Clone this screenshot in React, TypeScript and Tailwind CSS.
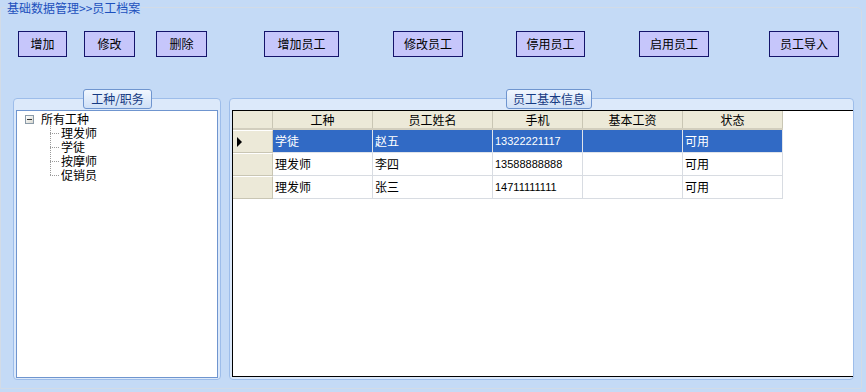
import React from "react";

const FONT = { fontFamily: '"Noto Sans CJK SC", "Liberation Sans", sans-serif' };

const BUTTONS = [
  { label: "增加", ml: "ml-[17px]", w: "w-[49px]" },
  { label: "修改", ml: "ml-[17px]", w: "w-[51px]" },
  { label: "删除", ml: "ml-[21px]", w: "w-[51px]" },
  { label: "增加员工", ml: "ml-[57px]", w: "w-[75px]" },
  { label: "修改员工", ml: "ml-[54px]", w: "w-[70px]" },
  { label: "停用员工", ml: "ml-[53px]", w: "w-[69px]" },
  { label: "启用员工", ml: "ml-[54px]", w: "w-[70px]" },
  { label: "员工导入", ml: "ml-[60px]", w: "w-[70px]" },
];

const COLS = [
  { title: "工种", w: "w-[100px]" },
  { title: "员工姓名", w: "w-[120px]" },
  { title: "手机", w: "w-[90px]" },
  { title: "基本工资", w: "w-[100px]" },
  { title: "状态", w: "w-[100px]" },
];

const ROWS = [
  ["学徒", "赵五", "13322221117", "", "可用"],
  ["理发师", "李四", "13588888888", "", "可用"],
  ["理发师", "张三", "14711111111", "", "可用"],
];

const TREE_CHILDREN = ["理发师", "学徒", "按摩师", "促销员"];

function Legend({ text, className }: { text: string; className: string }) {
  return (
    <div
      className={`absolute top-[-10px] h-[20px] flex items-center justify-center rounded-[3px] border border-[#6f95cf] bg-gradient-to-b from-[#f1f7fe] to-[#cfe0f7] text-[12px] leading-[14px] text-[#163a82] ${className}`}
    >
      {text}
    </div>
  );
}

export default function App() {
  return (
    <div className="w-[866px] h-[392px] bg-[#c4daf6] overflow-hidden text-black" style={FONT}>
      <div className="relative mt-[7px] w-[862px] h-[382px] border border-[#d2dbe7] rounded-tr-[5px] rounded-tl-[3px]">
        <div className="absolute top-[-7px] left-[5px] px-[1px] bg-[#c4daf6] text-[12px] leading-[14px] text-[#1c50bd]">
          基础数据管理&gt;&gt;员工档案
        </div>

        <div className="flex pt-[23px]">
          {BUTTONS.map((b) => (
            <button
              key={b.label}
              className={`${b.ml} ${b.w} h-[26px] border border-[#14146b] bg-[#c6c6fb] text-[12px] leading-[14px] flex items-center justify-center`}
            >
              {b.label}
            </button>
          ))}
        </div>

        <div className="flex mt-[41px]">
          {/* left group */}
          <div className="relative ml-[12px] w-[208px] h-[282px] rounded-[4px] border border-[#9dbdea] bg-[#dce9fa] pt-[11px] pl-[2px] pr-[2px] pb-[1px]">
            <Legend text="工种/职务" className="left-[69px] w-[69px]" />
            <div className="h-full bg-white border border-[#6f95cf] pt-[1px] text-[12px] leading-[14px]">
              <div className="flex items-center h-[14px]">
                <div className="ml-[8px] w-[9px] h-[9px] border border-[#8a9aa8] bg-gradient-to-br from-white to-[#d8d8d0] flex items-center justify-center">
                  <div className="w-[5px] h-[1px] bg-[#333]" />
                </div>
                <span className="ml-[7px]">所有工种</span>
              </div>
              <div className="flex ml-[33px]">
                <svg width="11" height="56" className="shrink-0">
                  <line x1="0.5" y1="0" x2="0.5" y2="49" stroke="#9a9a9a" strokeDasharray="1 1" />
                  {[7, 21, 35, 49].map((y) => (
                    <line key={y} x1="0" y1={y + 0.5} x2="10" y2={y + 0.5} stroke="#9a9a9a" strokeDasharray="1 1" />
                  ))}
                </svg>
                <div className="flex flex-col">
                  {TREE_CHILDREN.map((c) => (
                    <div key={c} className="h-[14px] leading-[14px]">
                      {c}
                    </div>
                  ))}
                </div>
              </div>
            </div>
          </div>

          {/* right group */}
          <div className="relative ml-[8px] w-[625px] h-[282px] rounded-[4px] border border-[#9dbdea] bg-[#dce9fa] pt-[11px] pl-[2px] pb-[2px]">
            <Legend text="员工基本信息" className="left-[276px] w-[86px]" />
            <div className="h-full bg-white border-l border-t border-b border-black overflow-hidden">
              <div className="flex w-fit h-[19px] border-b-[2px] border-[#d2cebe] bg-[#ece9d8]">
                <div className="w-[40px] border-r border-[#c9c6b4]" />
                {COLS.map((c) => (
                  <div
                    key={c.title}
                    className={`${c.w} flex items-center justify-center text-[12px] leading-[14px] border-r border-[#c9c6b4]`}
                  >
                    {c.title}
                  </div>
                ))}
              </div>
              {ROWS.map((r, i) => {
                const sel = i === 0;
                return (
                  <div key={i} className="flex h-[23px]">
                    <div className="w-[40px] bg-[#ece9d8] border-r border-b border-[#c9c6b4] border-t border-t-white flex items-center pl-[4px]">
                      {sel && (
                        <svg width="6" height="10">
                          <polygon points="0,0 5,5 0,10" fill="#000" />
                        </svg>
                      )}
                    </div>
                    {r.map((v, j) => (
                      <div
                        key={j}
                        className={`${COLS[j].w} flex items-center pl-[2px] border-r border-b ${
                          sel ? "bg-[#316ac5] text-white border-[#e0e4ea]" : "border-[#d8dce2]"
                        } ${j === 2 ? "text-[11px]" : "text-[12px]"} leading-[14px]`}
                        style={j === 2 ? { fontFamily: '"Liberation Sans", sans-serif' } : undefined}
                      >
                        {v}
                      </div>
                    ))}
                  </div>
                );
              })}
            </div>
          </div>
        </div>
      </div>
    </div>
  );
}
